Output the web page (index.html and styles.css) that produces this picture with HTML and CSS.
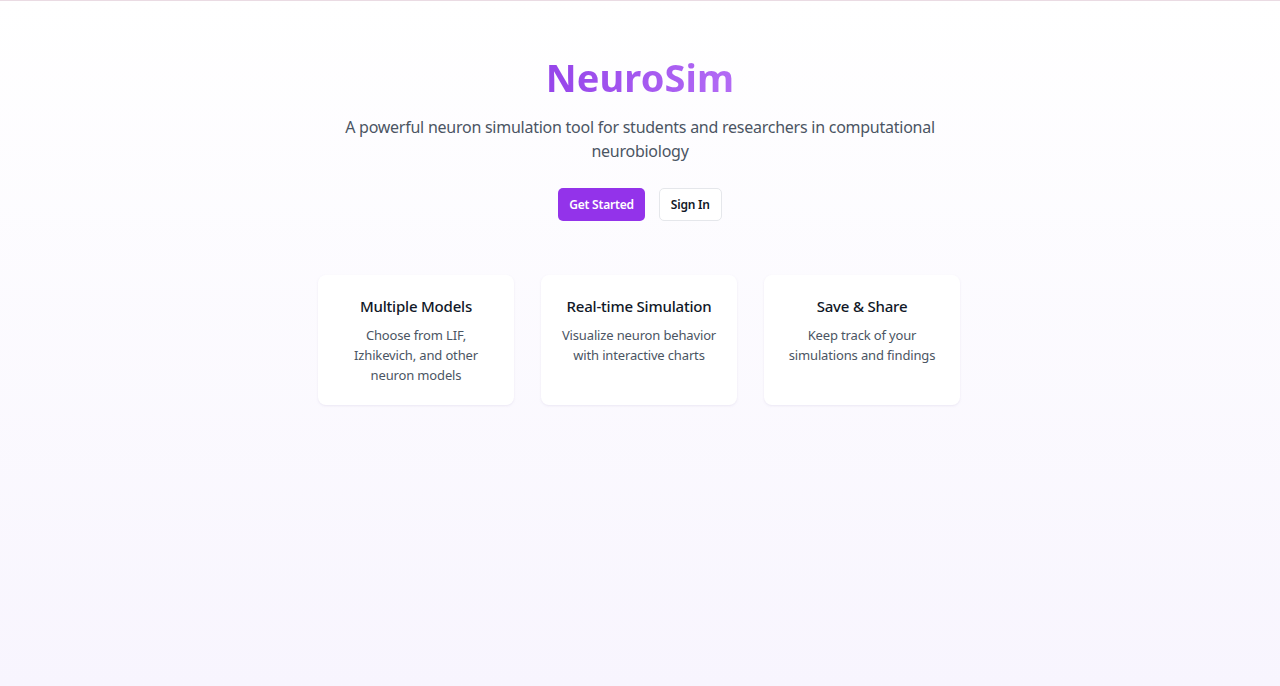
FILE: index.html
```html
<!DOCTYPE html>
<html lang="en">
<head>
<meta charset="utf-8">
<title>NeuroSim</title>
<link rel="stylesheet" href="styles.css">
</head>
<body>
<main class="hero">
  <h1 class="title">NeuroSim</h1>
  <p class="subtitle">A powerful neuron simulation tool for students and researchers in computational neurobiology</p>
  <div class="actions">
    <a class="btn btn-primary" href="#">Get Started</a>
    <a class="btn btn-outline" href="#">Sign In</a>
  </div>
  <section class="features">
    <div class="card">
      <h3 class="card-title">Multiple Models</h3>
      <p class="card-text">Choose from LIF, Izhikevich, and other neuron models</p>
    </div>
    <div class="card">
      <h3 class="card-title">Real-time Simulation</h3>
      <p class="card-text">Visualize neuron behavior with interactive charts</p>
    </div>
    <div class="card">
      <h3 class="card-title">Save &amp; Share</h3>
      <p class="card-text">Keep track of your simulations and findings</p>
    </div>
  </section>
</main>
</body>
</html>
```

FILE: styles.css
```css
* { box-sizing: border-box; }
html, body { margin: 0; padding: 0; }
body {
  min-height: 686px;
  font-family: "Noto Sans", "Open Sans", sans-serif;
  background: linear-gradient(to bottom, #ffffff 0%, #f8f5fe 100%);
  border-top: 1px solid #eadbe3;
  color: #111827;
}
.hero {
  display: flex;
  flex-direction: column;
  align-items: center;
  padding-top: 52px;
}
.title {
  margin: 0;
  font-size: 38px;
  line-height: 48px;
  font-weight: 700;
  background: linear-gradient(90deg, #9645ea, #b36bf5);
  -webkit-background-clip: text;
  background-clip: text;
  color: transparent;
  letter-spacing: 0.1px;
}
.subtitle {
  margin: 14px 0 0;
  max-width: 620px;
  text-align: center;
  font-size: 16px;
  line-height: 24px;
  letter-spacing: -0.25px;
  color: #4b5563;
}
.actions {
  display: flex;
  gap: 14px;
  margin-top: 25px;
}
.btn {
  display: inline-flex;
  align-items: center;
  justify-content: center;
  height: 33px;
  padding: 0 11px;
  border-radius: 5px;
  font-size: 12px;
  font-weight: 600;
  letter-spacing: -0.2px;
  white-space: nowrap;
  text-decoration: none;
}
.btn-primary {
  background: #9333ea;
  color: #ffffff;
}
.btn-outline {
  background: #ffffff;
  color: #111827;
  border: 1px solid #e5e7eb;
}
.features {
  display: grid;
  grid-template-columns: repeat(3, 196px);
  gap: 27px;
  margin-top: 54px;
  transform: translateX(-1px);
}
.card {
  height: 130px;
  background: #ffffff;
  border-radius: 8px;
  box-shadow: 0 1px 3px rgba(120, 100, 160, 0.08), 0 1px 2px rgba(120, 100, 160, 0.04);
  padding: 19px 16px;
  text-align: center;
}
.card-title {
  margin: 0;
  font-size: 15px;
  line-height: 24px;
  font-weight: 500;
  letter-spacing: -0.2px;
  color: #111827;
}
.card-text {
  margin: 7px 0 0;
  font-size: 13px;
  line-height: 20px;
  letter-spacing: -0.15px;
  color: #4b5563;
}
```
